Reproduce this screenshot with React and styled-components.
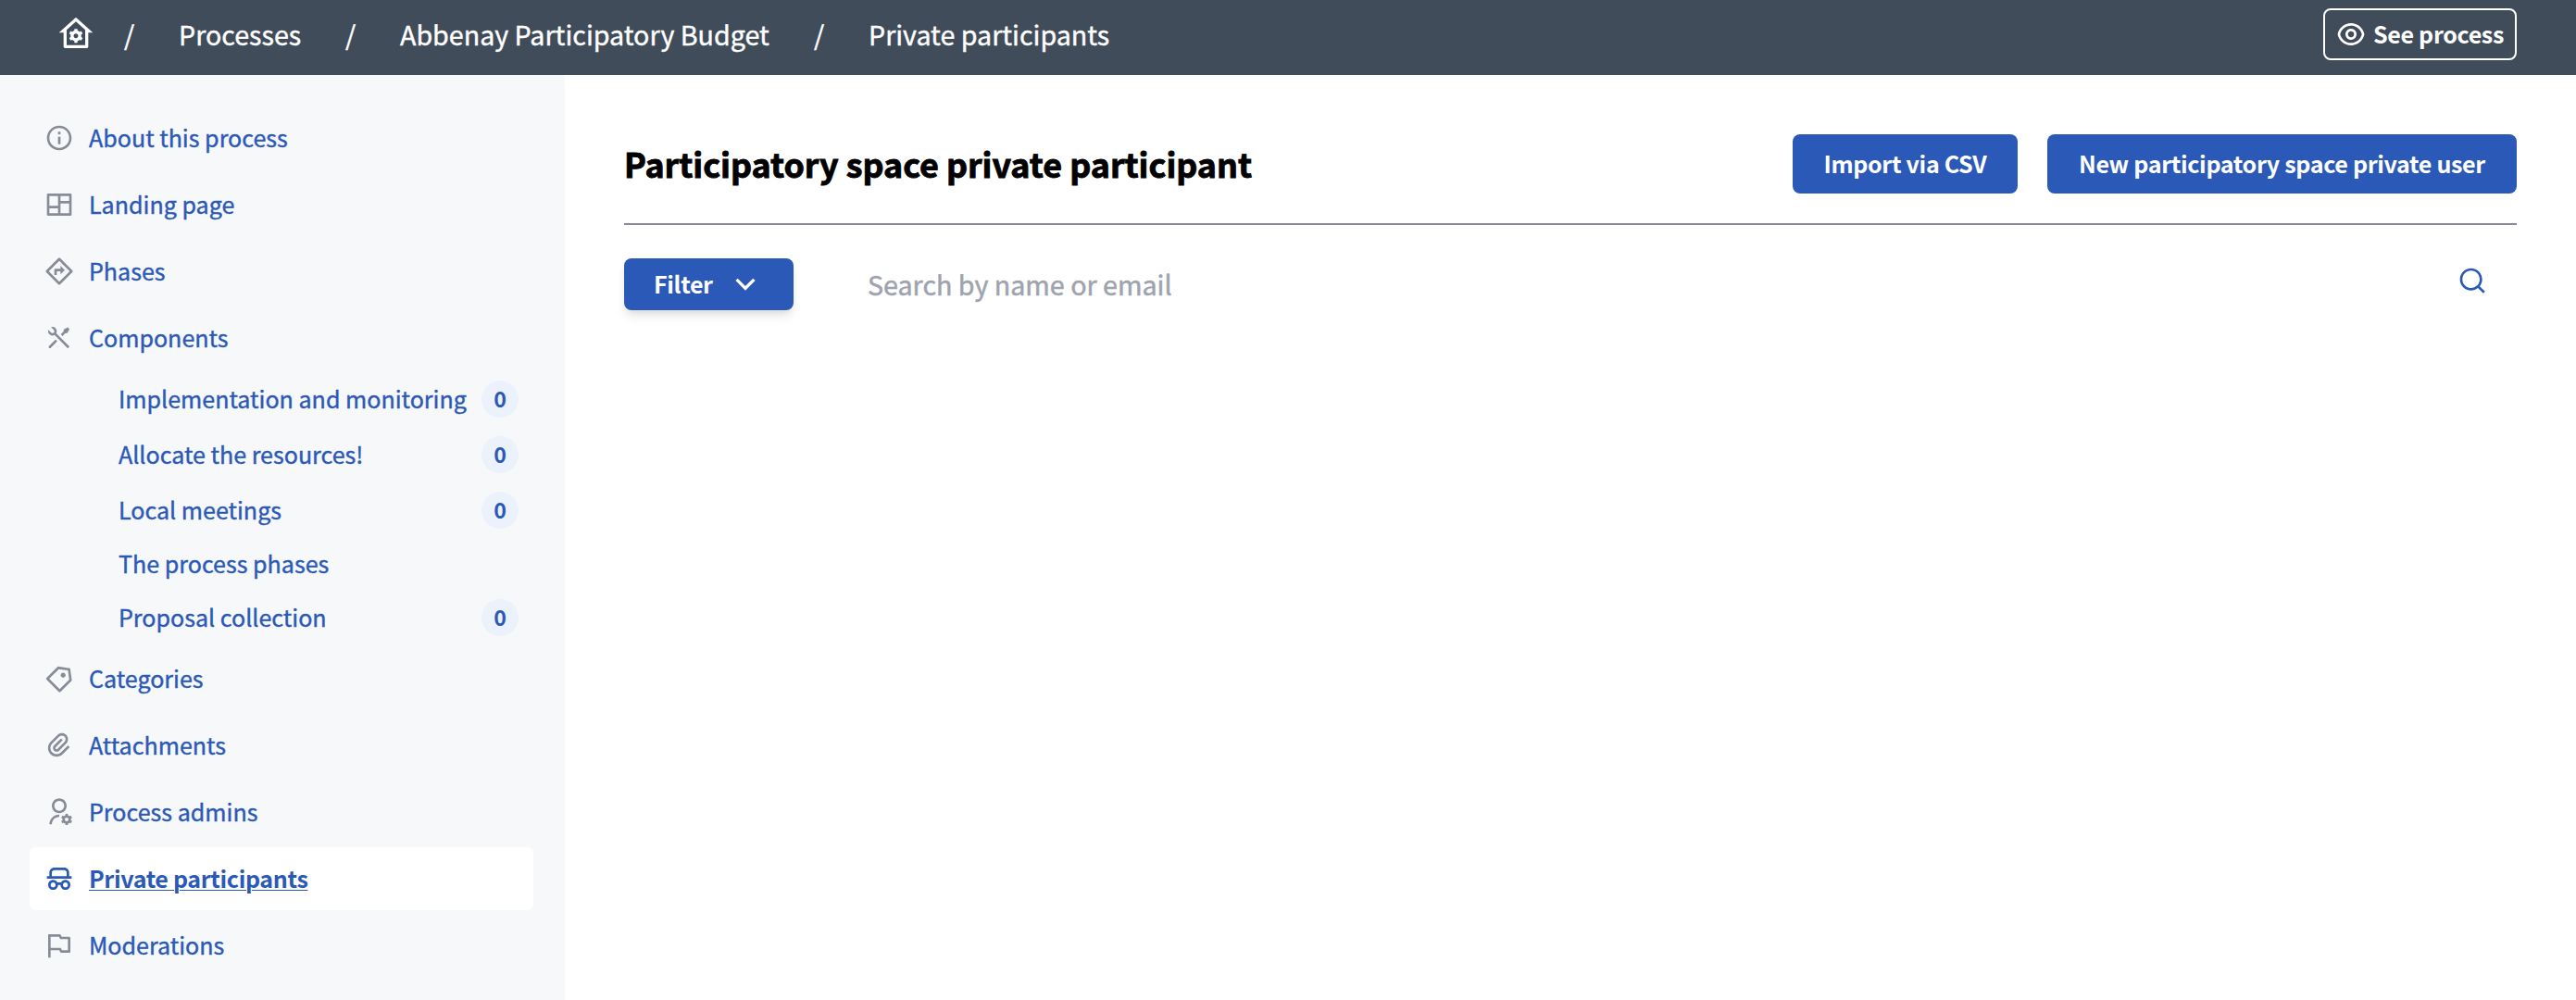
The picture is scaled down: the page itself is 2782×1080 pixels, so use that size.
import React from "react";
import styled, { createGlobalStyle } from "styled-components";
import {
  RiHomeGearLine,
  RiInformationLine,
  RiLayoutMasonryLine,
  RiDirectionLine,
  RiToolsLine,
  RiPriceTag3Line,
  RiAttachment2,
  RiUserSettingsLine,
  RiSpyLine,
  RiFlagLine,
  RiEyeLine,
  RiSearchLine,
  RiArrowDownSLine,
} from "react-icons/ri";

const blue = "#2b59b8";
const slate = "#414c5b";
const gray = "#878c98";

const GlobalStyle = createGlobalStyle`
  *, *::before, *::after { box-sizing: border-box; }
  body {
    margin: 0;
    background: #fff;
    font-family: "Source Sans Pro", "Noto Sans CJK SC", "Noto Sans", sans-serif;
    -webkit-font-smoothing: antialiased;
  }
  a { color: inherit; text-decoration: none; }
  ul { list-style: none; margin: 0; padding: 0; }
  svg { display: block; flex: none; }
`;

const Page = styled.div`
  display: flex;
  flex-direction: column;
  height: 1080px;
  overflow: hidden;
`;

const TopBar = styled.header`
  display: flex;
  justify-content: space-between;
  align-items: flex-start;
  height: 81px;
  padding: 9px 64px 0 62px;
  background: ${slate};
  color: #fff;
`;

const Breadcrumb = styled.nav`
  display: flex;
  align-items: center;
  height: 56px;
  font-size: 28.65px;
  line-height: 56px;
  white-space: nowrap;
  -webkit-text-stroke: 0.4px currentColor;
`;

const HomeLink = styled.a`
  -webkit-text-stroke: 0;
`;

const Crumb = styled.a`
  width: ${(p) => p.$width}px;
  padding-bottom: 1px;
`;

const Slash = styled.span`
  width: 11px;
  margin: 0 48px 0 ${(p) => p.$before ?? 48}px;
  padding-bottom: 1px;
`;

const SeeProcess = styled.a`
  display: flex;
  align-items: center;
  gap: 8px;
  width: 209px;
  height: 56px;
  padding-left: 12px;
  border: 2px solid #fff;
  border-radius: 8px;
  font-size: 25.07px;
  font-weight: 700;
  letter-spacing: -0.34px;
  line-height: 50px;
  white-space: nowrap;

  span { padding-bottom: 2px; }
`;

const Body = styled.div`
  display: flex;
  flex: 1;
`;

const Sidebar = styled.aside`
  width: 610px;
  padding: 34px 34px 0 32px;
  background: #f7f8fa;
  color: ${blue};
`;

const Menu = styled.ul`
  display: flex;
  flex-direction: column;
  gap: 4px;
`;

const MenuLink = styled.a`
  display: flex;
  align-items: center;
  gap: 16px;
  height: 68px;
  padding-left: 16px;
  border-radius: 6px;
  background: ${(p) => (p.$active ? "#fff" : "transparent")};
  font-size: 25.07px;
  font-weight: ${(p) => (p.$active ? 700 : 400)};
  letter-spacing: ${(p) => (p.$active ? "-0.36px" : "normal")};
  line-height: 66px;
  white-space: nowrap;

  svg { color: ${(p) => (p.$active ? blue : gray)}; }
  span {
    padding-bottom: 2px;
    -webkit-text-stroke: ${(p) => (p.$active ? "0" : "0.4px currentColor")};
    text-decoration: ${(p) => (p.$active ? "underline" : "none")};
    text-decoration-thickness: 1px;
    text-underline-offset: 2px;
  }
`;

const SubMenu = styled.ul`
  display: flex;
  flex-direction: column;
  gap: 20px;
  padding: 12px 16px 8px 96px;
`;

const SubItem = styled.li`
  display: flex;
  justify-content: space-between;
  align-items: center;
  font-size: 25.07px;
  line-height: 34px;
  white-space: nowrap;

  a {
    padding-bottom: 2px;
    -webkit-text-stroke: 0.4px currentColor;
  }
`;

const Badge = styled.span`
  width: 40px;
  height: 40px;
  border-radius: 50%;
  background: #ebf2fc;
  font-size: 23.2px;
  font-weight: 700;
  line-height: 39px;
  text-align: center;
`;

const Main = styled.main`
  flex: 1;
  padding: 64px 64px 0 64px;
`;

const TitleBar = styled.div`
  display: flex;
  align-items: flex-start;
  gap: 32px;
  height: 98px;
  border-bottom: 2px solid ${gray};
`;

const Title = styled.h1`
  flex: 1;
  margin: 0;
  color: #000;
  font-size: 35.85px;
  font-weight: 700;
  line-height: 63px;
  white-space: nowrap;
  -webkit-text-stroke: 0.9px currentColor;
`;

const Button = styled.button`
  width: ${(p) => p.$width}px;
  height: 64px;
  padding: 0 0 2px;
  border: 0;
  border-radius: 8px;
  background: ${blue};
  color: #fff;
  font-family: inherit;
  font-size: 25.07px;
  font-weight: 700;
  letter-spacing: -0.34px;
  line-height: 62px;
  white-space: nowrap;
`;

const SearchBar = styled.div`
  display: flex;
  align-items: center;
  height: 56px;
  margin-top: 36px;
  padding-right: 32px;
`;

const FilterButton = styled(Button)`
  display: flex;
  align-items: center;
  justify-content: space-between;
  height: 56px;
  padding: 0 32px;
  line-height: 54px;
  box-shadow: 0 8px 12px -2px rgba(0, 0, 0, 0.1), 0 4px 8px -4px rgba(0, 0, 0, 0.1);

  span { padding-bottom: 2px; }
`;

const SearchInput = styled.input`
  flex: 1;
  height: 56px;
  margin-left: 80px;
  padding: 0 0 2px;
  border: 0;
  outline: 0;
  background: none;
  font-family: inherit;
  font-size: 28.65px;

  &::placeholder {
    color: #9ea3ae;
    opacity: 1;
    -webkit-text-stroke: 0.5px #9ea3ae;
  }
`;

const SearchIcon = styled(RiSearchLine)`
  margin-bottom: 8px;
  color: ${blue};
`;

const COMPONENTS = [
  ["Implementation and monitoring", 0],
  ["Allocate the resources!", 0],
  ["Local meetings", 0],
  ["The process phases", null],
  ["Proposal collection", 0],
];

const MENU = [
  { label: "About this process", icon: RiInformationLine },
  { label: "Landing page", icon: RiLayoutMasonryLine },
  { label: "Phases", icon: RiDirectionLine },
  { label: "Components", icon: RiToolsLine, children: COMPONENTS },
  { label: "Categories", icon: RiPriceTag3Line },
  { label: "Attachments", icon: RiAttachment2 },
  { label: "Process admins", icon: RiUserSettingsLine },
  { label: "Private participants", icon: RiSpyLine, active: true },
  { label: "Moderations", icon: RiFlagLine },
];

export default function App() {
  return (
    <Page>
      <GlobalStyle />
      <TopBar>
        <Breadcrumb>
          <HomeLink href="#"><RiHomeGearLine size={40} /></HomeLink>
          <Slash $before={32}>/</Slash>
          <Crumb href="#" $width={132}>Processes</Crumb>
          <Slash>/</Slash>
          <Crumb href="#" $width={399}>Abbenay Participatory Budget</Crumb>
          <Slash>/</Slash>
          <Crumb href="#" $width={260}>Private participants</Crumb>
        </Breadcrumb>
        <SeeProcess href="#"><RiEyeLine size={32} /><span>See process</span></SeeProcess>
      </TopBar>
      <Body>
        <Sidebar>
          <Menu>
            {MENU.map(({ label, icon: Icon, active, children }) => (
              <li key={label}>
                <MenuLink href="#" $active={active}>
                  <Icon size={32} />
                  <span>{label}</span>
                </MenuLink>
                {children && (
                  <SubMenu>
                    {children.map(([name, count]) => (
                      <SubItem key={name}>
                        <a href="#">{name}</a>
                        {count !== null && <Badge>{count}</Badge>}
                      </SubItem>
                    ))}
                  </SubMenu>
                )}
              </li>
            ))}
          </Menu>
        </Sidebar>
        <Main>
          <TitleBar>
            <Title>Participatory space private participant</Title>
            <Button $width={243}>Import via CSV</Button>
            <Button $width={507}>New participatory space private user</Button>
          </TitleBar>
          <SearchBar>
            <FilterButton $width={183}>
              <span>Filter</span>
              <RiArrowDownSLine size={40} />
            </FilterButton>
            <SearchInput placeholder="Search by name or email" />
            <SearchIcon size={32} />
          </SearchBar>
        </Main>
      </Body>
    </Page>
  );
}
